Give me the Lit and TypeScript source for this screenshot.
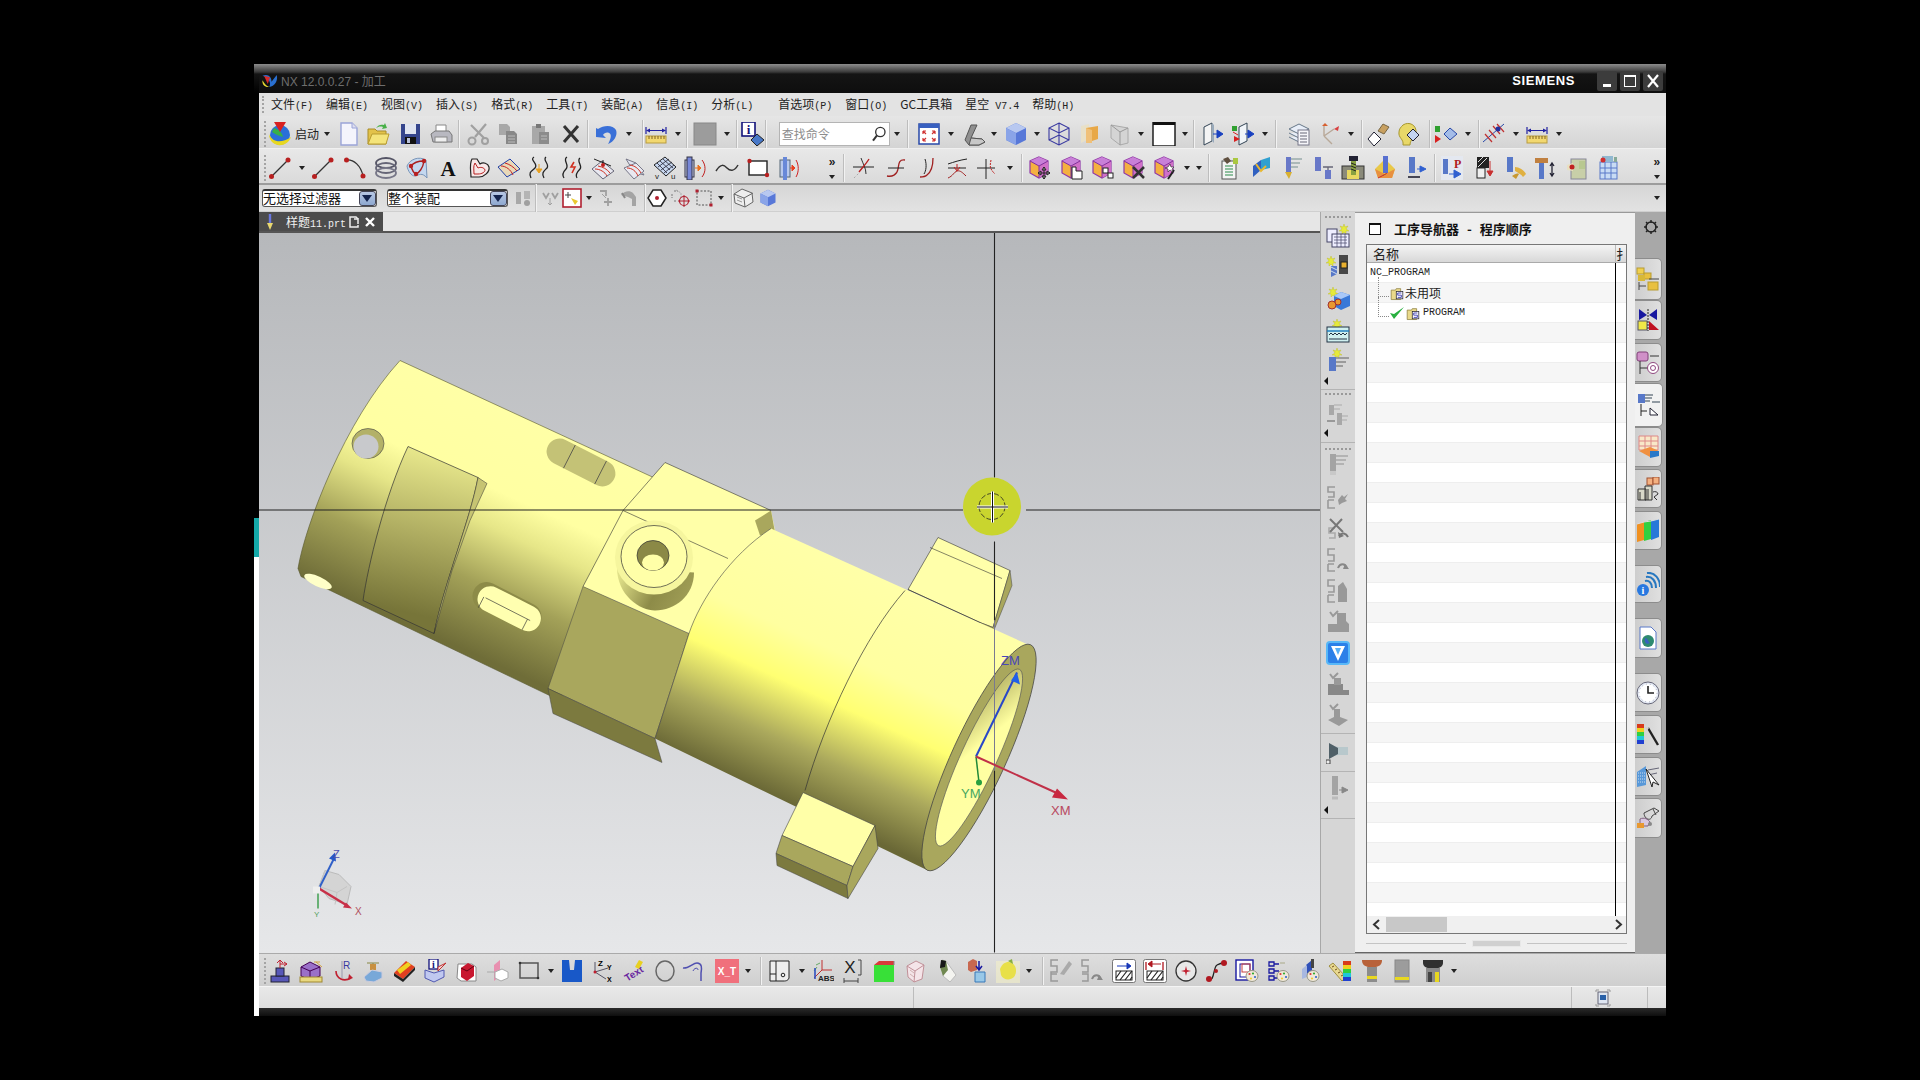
import { LitElement, html, css, svg } from "lit";
import { customElement } from "lit/decorators.js";

// reference was measured on the 1568px preview, specs below use those numbers
const K = 1920 / 1568;

const burst = (x: number, y: number) =>
  svg`<path transform="translate(${x} ${y})" d="M5 0l1 3 3-1-2 3 3 2-3 0 0 3-2-2-2 2 0-3-3 0 3-2-2-3 3 1z" fill="#e6ea3a" stroke="#b8b820" stroke-width=".4"/>`;
const rainbow = (x: number, y: number, w: number) => svg`
  <rect x=${x} y=${y} width=${w} height="4" fill="#d83a1a"/><rect x=${x} y=${y + 4} width=${w} height="4" fill="#f0d020"/>
  <rect x=${x} y=${y + 8} width=${w} height="4" fill="#30d040"/><rect x=${x} y=${y + 12} width=${w} height="4" fill="#20c8d8"/>
  <rect x=${x} y=${y + 16} width=${w} height="4" fill="#2040d0"/>`;
const palette = svg`<ellipse cx="17" cy="17" rx="6" ry="5.5" fill="#f0e8d8" stroke="#998"/><circle cx="14.500" cy="15" r="1.100" fill="#d33"/><circle cx="18" cy="14.500" r="1.100" fill="#3a3"/><circle cx="20" cy="18" r="1.100" fill="#36c"/><circle cx="16" cy="19.500" r="1.100" fill="#ec3"/>`;
const purple = (extra: unknown) => svg`
  <path d="M11 1l9 4v12l-9 5-9-5V5z" fill="#f4b040" stroke="#9038a8" stroke-width="1.200"/><path d="M11 1l9 4-9 5-9-5z" fill="#c880d8"/><path d="M11 10l9-5v12l-9 5z" fill="#d070c8"/><path d="M2 5l9 5 9-5M11 10v12" fill="none" stroke="#8030a0"/>${extra}`;
const folderS = svg`<path d="M3 7h6l1-2h6v15H3z" fill="#e9d98a" stroke="#8a7c3c"/><rect x="10" y="9" width="9" height="10" fill="#fff" stroke="#223"/><path d="M17 11h-5v3h5v3h-5" fill="none" stroke="#22a" stroke-width="1.100"/>`;
const hatchBox = (top: unknown) => svg`
  <rect x=".5" y=".5" width="23" height="23" rx="2" fill="#fff" stroke="#777"/>${top}
  <rect x="4" y="12" width="16" height="9" fill="#fff" stroke="#222"/>
  <path d="M4 19l5-7M8 21l7-9M13 21l7-9M18 21l2-3" stroke="#222" stroke-width="1.200"/>`;
const cubeShape = svg`<path d="M12 1l10 5v12l-10 5-10-5V6z" fill="#5878d8"/><path d="M12 1l10 5-10 5L2 6z" fill="#b8c8f0"/><path d="M2 6l10 5v12L2 18z" fill="#8aa4e8"/>`;

const I: Record<string, unknown> = {
  logo: svg`<circle cx="12" cy="13" r="10" fill="#2a6fd8"/><path d="M1 12c3 8 12 10 22 3-2 6-8 9-13 8C5 22 1 18 1 12z" fill="#e8d820"/><path d="M6 6c4 1 8 4 9 9-4-1-8-3-11-5z" fill="#38b048"/><path d="M6 0h12l-6 10z" fill="#d82020"/>`,
  new: svg`<path d="M4 1h11l5 5v17H4z" fill="#f4f4fc" stroke="#9aa4d8" stroke-width="1.400"/><path d="M15 1v5h5" fill="#dde" stroke="#9aa4d8"/>`,
  open: svg`<path d="M2 7h7l2 2h9v13H2z" fill="#e2c24a" stroke="#a88c28"/><path d="M2 22l4-10h17l-3 10z" fill="#f4e47a" stroke="#b89c30"/><path d="M10 6c2-3 5-4 8-3l1-2 2 5-5 1 1-2c-3-1-5 0-7 1z" fill="#48b048"/>`,
  save: svg`<rect x="3" y="2" width="19" height="20" fill="#34448c"/><rect x="7" y="2" width="11" height="10" fill="#dfe4f0"/><rect x="7" y="15" width="11" height="7" fill="#111"/><rect x="9" y="16" width="3" height="5" fill="#b8c0d8"/>`,
  print: svg`<path d="M7 3h10v8H7z" fill="#fff" stroke="#888"/><path d="M2 12l4-3h14l3 4v7H4z" fill="#b8b8c0" stroke="#777"/><rect x="6" y="15" width="12" height="5" fill="#eee" stroke="#888"/>`,
  cut: svg`<path d="M20 2L9 15M5 3l13 13" stroke="#a0a0a0" stroke-width="2.200"/><circle cx="6" cy="19" r="3.500" fill="none" stroke="#a0a0a0" stroke-width="2"/><circle cx="19" cy="19" r="3" fill="none" stroke="#a0a0a0" stroke-width="2"/>`,
  copy: svg`<path d="M3 2h8l3 3v8H3z" fill="#a8a8a8"/><path d="M10 9h8l3 3v10H10z" fill="#888"/><path d="M12 14h7M12 17h7M12 20h7" stroke="#bbb"/>`,
  paste: svg`<rect x="4" y="4" width="13" height="18" fill="#a8a8a8"/><rect x="8" y="2" width="5" height="4" fill="#777"/><rect x="11" y="10" width="10" height="12" fill="#8c8c8c"/><path d="M13 14h6M13 17h6" stroke="#bbb"/>`,
  del: svg`<path d="M5 4l14 16M19 4L5 20" stroke="#333" stroke-width="3"/>`,
  undo: svg`<path d="M3 7c6-4 15-4 18 1 2 5-2 12-8 14 3-5 4-10 1-11-2-1-5 0-6 2l3 3-10-1 0-9z" fill="#3a70d8"/>`,
  ruler: svg`<rect x="2" y="14" width="20" height="7" fill="#f2d870" stroke="#b89c40"/><path d="M5 14v3M8 14v3M11 14v3M14 14v3M17 14v3M20 14v3" stroke="#806020"/><path d="M2 5v7M22 5v7M3 8.500h18" stroke="#2020a0" stroke-width="1.200"/><path d="M2 8.500l4-2v4zM22 8.500l-4-2v4z" fill="#2020a0"/>`,
  gbox: svg`<rect x="1" y="1" width="22" height="22" fill="#9c9c9c" stroke="#888"/>`,
  info: svg`<rect x="1" y="0" width="13" height="14" fill="#fff" stroke="#12127a" stroke-width="1.600"/><text x="7.500" y="12" font-size="13" font-weight="700" text-anchor="middle" font-family="Liberation Serif" fill="#12127a">i</text><path d="M16 12l7 6-7 6-6-6z" fill="#4878c8" stroke="#222"/>`,
  fit: svg`<rect x="2" y="2" width="20" height="20" fill="#fff" stroke="#2848a8" stroke-width="1.500"/><rect x="2" y="2" width="20" height="4" fill="#3860c0"/><path d="M6 9l3 3M6 9v3M6 9h3M18 9l-3 3M18 9v3M18 9h-3M6 19l3-3M6 19v-3M6 19h3M18 19l-3-3M18 19v-3M18 19h-3" stroke="#d03030" stroke-width="1.200" fill="none"/>`,
  shade: svg`<path d="M4 18L10 3h6l-6 13 11 1 3 3-6 3H8z" fill="#909090" stroke="#555"/><path d="M10 16l11 1 3 3-6 3H8z" fill="#c8c8c8" stroke="#555"/>`,
  cube: cubeShape,
  wire: svg`<path d="M12 1l10 5v12l-10 5-10-5V6zM2 6l10 5 10-5M12 11v12M2 18l10-5 10 5M12 1v12" fill="none" stroke="#3838a0" stroke-width="1.100"/>`,
  fad1: svg`<path d="M4 4l8-2v15l-8 4z" fill="#e8e0c8"/><path d="M9 6l12-2v13l-12 4z" fill="#e8a848"/><path d="M9 6l6 2v13l-6 0z" fill="#f0c078"/>`,
  fad2: svg`<path d="M3 3l17 3v15l-8 2-9-7z" fill="#d4d4d4" stroke="#aaa"/><path d="M3 3l9 7 8-4M12 10v13" fill="none" stroke="#999"/>`,
  wbox: svg`<rect x="1" y="0" width="22" height="24" fill="#fff" stroke="#111" stroke-width="1.400"/><rect x="1" y="0" width="22" height="3" fill="#111"/>`,
  vcut1: svg`<path d="M3 5l8-4v18l-8 4z" fill="#f4f4f4" stroke="#345"/><path d="M11 1l2 2v18l-2-2z" fill="#9ab"/><path d="M12 12h7M16 8l6 4-6 4z" fill="#1840c0" stroke="#1840c0"/>`,
  vcut2: svg`<path d="M8 5l8-4v18l-8 4z" fill="#f0f4f8" stroke="#345"/><path d="M1 4h5v5H1z" fill="#30a030"/><path d="M3 14l6 3-6 3z" fill="#d82020"/><path d="M2 10l5 3" stroke="#d82020"/><path d="M14 12h5M17 8l6 4-6 4z" fill="#1840c0" stroke="#1840c0"/>`,
  layers: svg`<path d="M2 7l10-5 10 5-10 5zM2 11l10 5 10-5M2 15l10 5 10-5" fill="#e8eef8" stroke="#678"/><rect x="11" y="8" width="11" height="15" fill="#f6f6fa" stroke="#778"/><path d="M13 11h7M13 14h7M13 17h7M13 20h7" stroke="#667"/>`,
  csys: svg`<path d="M7 14V3M7 14l10-7M7 14l8 8" stroke="#b8a898" stroke-width="1.400"/><path d="M5 4l3-3 3 3z" fill="#d86030"/><path d="M17 7l5-3-1 5z" fill="#d84040"/>`,
  diam: svg`<path d="M8 10l7 7-7 7-6-7z" fill="#fff" stroke="#223"/><path d="M12 9l5-7 6 3-5 7z" fill="#c8a060" stroke="#764"/>`,
  head: svg`<path d="M6 3c6-4 14 0 13 8-1 5-6 6-6 12H6c1-6-5-7-4-13 0-3 2-5 4-7z" fill="#e8d868" stroke="#a89830"/><path d="M16 7l6 6-6 6-6-6z" fill="#c4d4f0" stroke="#223"/>`,
  rg: svg`<path d="M1 4h5v6H1z" fill="#30a030"/><path d="M1 13l6 4-6 4z" fill="#d82020"/><path d="M16 6l7 6-7 6-6-6z" fill="#a4bce8" stroke="#2848a8"/>`,
  hatchr: svg`<path d="M1 20L22 2" stroke="#2848a8"/><path d="M3 12l7 8M7 8l7 8M11 4l7 8M15 2l7 8" stroke="#c03030" stroke-width="1.200"/><circle cx="16" cy="7" r="2.500" fill="#2030a0"/>`,
  line: svg`<path d="M3 21L20 4" stroke="#333" stroke-width="1.300"/><circle cx="3.500" cy="20.500" r="2.500" fill="#b82020"/><circle cx="20" cy="4" r="2.500" fill="#b82020"/>`,
  arc: svg`<path d="M3 4c8-1 15 6 17 16" fill="none" stroke="#333" stroke-width="1.300"/><circle cx="3.500" cy="4" r="2.500" fill="#b82020"/><circle cx="20" cy="20" r="2.500" fill="#b82020"/>`,
  spiral: svg`<ellipse cx="12" cy="7" rx="10" ry="5" fill="none" stroke="#556" stroke-width="1.800"/><ellipse cx="12" cy="12" rx="10" ry="5" fill="none" stroke="#667" stroke-width="1.800"/><ellipse cx="12" cy="17" rx="10" ry="5" fill="none" stroke="#778" stroke-width="1.800"/>`,
  surf: svg`<path d="M2 10C5 3 14 0 21 4l1 18c-5-6-8-3-12-2C6 20 3 15 2 10z" fill="#c4d8f0" stroke="#7894b8"/><path d="M6 10c3-4 8-5 13-5M6 10c1 4 3 7 5 8M11 18c3-1 7-6 8-13" fill="none" stroke="#a82020" stroke-width="1.400"/><circle cx="6" cy="10" r="2.200" fill="#b82020"/><circle cx="11" cy="18" r="2.200" fill="#b82020"/><circle cx="19" cy="5" r="2.200" fill="#b82020"/>`,
  A: svg`<text x="12" y="20" font-size="21" font-weight="700" text-anchor="middle" font-family="Liberation Serif" fill="#111">A</text>`,
  heart: svg`<path d="M5 3h5l3 5c3-2 8-1 9 3 1 5-5 10-10 10H4C4 16 2 8 5 3z" fill="#f8e8e8" stroke="#222" stroke-width="1.200"/><path d="M8 7l3 5c2-1 6-1 7 2 0 2-3 4-7 4H7C7 14 6 10 8 7z" fill="none" stroke="#b82020"/>`,
  patch: svg`<path d="M1 11l12-8 10 10-13 8z" fill="#e8d8b8" stroke="#2040a8"/><path d="M4 10c5 0 10 4 12 9M8 7c4 1 9 4 12 8" stroke="#c82020" fill="none"/>`,
  crv1: svg`<path d="M6 1C1 4 11 8 7 12c-3 3-7 4-4 10M18 1c-4 3 4 7 1 11-3 3-6 5-3 10" fill="none" stroke="#222" stroke-width="1.300"/><path d="M11 8v8M8 13l3 4 3-4z" fill="#e8a020" stroke="#e8a020"/>`,
  crv2: svg`<path d="M7 1C2 4 10 9 6 13c-3 3-4 6-2 9M20 2c-4 3 3 8 0 11-3 3-5 6-3 9" fill="none" stroke="#222" stroke-width="1.300"/><path d="M14 6l-3 5h4l-3 6" fill="none" stroke="#d03020" stroke-width="1.600"/>`,
  pl1: svg`<path d="M1 13L11 5l12 10-11 8z" fill="#e8e8f0" stroke="#667"/><path d="M4 13c5 0 10 3 12 7M7 10c5 1 9 3 12 7" stroke="#d03020" fill="none"/><path d="M3 3l17 7M12 4v6" stroke="#222"/><circle cx="12" cy="9" r="2" fill="#c02020"/>`,
  pl2: svg`<path d="M4 3l10 4 8 12-10-3z" fill="#dfe4f0" stroke="#778"/><path d="M2 12l12-5 8 8-10 8z" fill="#e8e8f0" stroke="#778"/><path d="M5 12c5 0 9 3 11 8M8 9c5 1 8 3 11 8" stroke="#d03020" fill="none"/>`,
  grid: svg`<path d="M1 9L12 1l11 10-10 9z" fill="#c8d8f0" stroke="#222"/><path d="M4 7l10 10M7 5l10 9M10 3l10 9M5 11l11-8M8 14l11-8M11 17l10-8" stroke="#223" stroke-width=".8"/><text x="2" y="23" font-size="8" font-family="Liberation Sans" fill="#222">v</text><text x="18" y="23" font-size="8" font-family="Liberation Sans" fill="#222">u</text>`,
  cyl: svg`<rect x="2" y="4" width="9" height="17" fill="#c8d0f0" stroke="#334"/><rect x="4" y="1" width="5" height="23" fill="#7888d8" stroke="#334"/><path d="M12 12h3M15 9l3 3-3 3z" fill="#e87020" stroke="#e87020"/><path d="M19 4c4 5 4 12 0 17" fill="none" stroke="#c02020"/>`,
  tilde: svg`<path d="M1 15c5-8 8-6 11-3s7 4 11-3" fill="none" stroke="#333" stroke-width="1.500"/>`,
  rect: svg`<rect x="3" y="5" width="18" height="14" fill="#fff" stroke="#222" stroke-width="1.400"/><circle cx="3.500" cy="5" r="2.200" fill="#b82020"/><circle cx="21" cy="19" r="2.200" fill="#b82020"/>`,
  cylb: svg`<rect x="4" y="4" width="10" height="17" fill="#b8c8ec" stroke="#567"/><rect x="7" y="1" width="4" height="23" fill="#6888d8"/><path d="M14 12h3M16 9l3 3-3 3z" fill="#e84020" stroke="#e84020"/><path d="M20 4c3 5 3 12 0 17" fill="none" stroke="#d02020"/>`,
  tr1: svg`<path d="M1 11h21" stroke="#222"/><path d="M9 2c2 6 5 10 5 16" fill="none" stroke="#333"/><path d="M17 3C14 8 10 12 7 16" stroke="#b82020" fill="none" stroke-width="1.400"/><path d="M2 22l5-5" stroke="#aaa" stroke-dasharray="2 2"/>`,
  tr2: svg`<path d="M21 4C14 3 15 9 14 13 13 19 8 21 3 20" fill="none" stroke="#a02020" stroke-width="1.300"/><path d="M4 12h16" stroke="#222"/>`,
  tr3: svg`<path d="M19 2c0 8-2 14-6 17-2 2-5 2-7 2" fill="none" stroke="#a02020" stroke-width="1.300"/><path d="M11 3c2 6 1 12-1 15" stroke="#222" fill="none"/>`,
  tr4: svg`<path d="M3 8c6-2 12-4 19-5M3 12h18" stroke="#222" fill="none"/><path d="M3 22c5-2 6-6 9-7 3-1 6 2 9 5" stroke="#a02020" fill="none"/><path d="M12 8v6M9 11l3 4 3-4" stroke="#c02020" fill="none"/>`,
  tr5: svg`<path d="M1 12h18M10 3v20" stroke="#222"/><path d="M15 4c-1 6-2 8 4 14" stroke="#c02020" stroke-dasharray="2 1" fill="none"/>`,
  c1: purple(svg`<path d="M16 11v12M10 17h12M16 11l-2 3h4zM16 23l-2-3h4zM10 17l3-2v4zM22 17l-3-2v4z" fill="#fff" stroke="#222"/>`),
  c2: purple(svg`<path d="M12 11h4v4h6v8H12z" fill="#fff" stroke="#222"/>`),
  c3: purple(svg`<rect x="12" y="12" width="5" height="5" fill="#fff" stroke="#222"/><rect x="17" y="17" width="5" height="5" fill="#fff" stroke="#222"/>`),
  c4: purple(svg`<path d="M11 11l11 11M22 11L11 22" stroke="#333" stroke-width="2.500"/>`),
  c5: purple(svg`<path d="M15 23l6-9" stroke="#222" stroke-width="2"/><path d="M17 8l1 3 3 0-2 2 1 3-3-2-2 2 0-3-3-1 3-1z" fill="#fff" stroke="#222" stroke-width=".6"/>`),
  m1: svg`<rect x="4" y="5" width="14" height="18" fill="#f4f4f4" stroke="#555"/><path d="M7 10h8M7 13h8M7 16h8M7 19h8" stroke="#2a8a4a"/><path d="M5 3l5-2 3 4-4 3z" fill="#605040"/><rect x="15" y="2" width="5" height="6" fill="#aac840"/>`,
  m2: svg`<path d="M4 10l8-6v10l-8 7z" fill="#3060c0"/><path d="M12 4l9-3v11l-9 2z" fill="#30a0d0"/><path d="M7 8l5 7 5-5" fill="none" stroke="#e8b830" stroke-width="2"/>`,
  m3: svg`<rect x="6" y="1" width="5" height="15" fill="#6878c8"/><path d="M11 3h11M11 7h9M11 11h7" stroke="#9aa" stroke-width="1.500"/><path d="M5 16h7l-3 7z" fill="#d8b030"/>`,
  m4: svg`<rect x="4" y="1" width="6" height="14" fill="#6878c8"/><path d="M12 11h10M17 11v11" stroke="#667" stroke-width="1.300"/><rect x="14" y="14" width="6" height="9" fill="#6878c8"/>`,
  m5: svg`<rect x="1" y="10" width="22" height="13" fill="#8a8a7a" stroke="#333"/><rect x="6" y="14" width="12" height="9" fill="#e8d860"/><rect x="8" y="0" width="9" height="5" fill="#223"/><path d="M10 5h5v14h-5z" fill="#88a040"/><path d="M10 7l5 2M10 10l5 2M10 13l5 2" stroke="#222"/>`,
  m6: svg`<path d="M12 3l10 10-3 9H5l-3-9z" fill="#e8c848"/><path d="M2 13l10 5 10-5-3 9H5z" fill="#e89040"/><rect x="10" y="0" width="5" height="17" fill="#5870d0"/><path d="M5 22c4-2 8-4 9-5" stroke="#d03030"/>`,
  m7: svg`<rect x="4" y="1" width="6" height="16" fill="#5878c8"/><path d="M3 21h12" stroke="#223" stroke-width="1.600"/><path d="M12 13h6M15 10l6 3-6 3z" fill="#3060d0" stroke="#3060d0"/>`,
  m8: svg`<rect x="1" y="0" width="22" height="24" fill="#e4e8f0"/><rect x="3" y="3" width="5" height="15" fill="#5878c8"/><text x="14" y="12" font-size="12" font-weight="700" font-family="Liberation Serif" fill="#b02020">P</text><path d="M9 18h7M14 14l7 4-7 4z" fill="#3060d0" stroke="#3060d0"/>`,
  m9: svg`<rect x="4" y="1" width="12" height="11" fill="#222"/><path d="M5 11l9-9M5 6l5-5" stroke="#ddd"/><rect x="4" y="12" width="8" height="10" fill="#f0f0f0" stroke="#222"/><path d="M17 5v14M14 15l3 5 3-5z" fill="#c83030" stroke="#c83030"/>`,
  m10: svg`<rect x="3" y="1" width="6" height="15" fill="#5878c8"/><path d="M11 11c4 0 9 3 11 7l-3 3c-2-3-5-4-8-6z" fill="#e0b040"/><path d="M8 20c3-2 5-3 7-2l-3 5z" fill="#c89830"/>`,
  m11: svg`<rect x="2" y="2" width="13" height="5" fill="#c08040"/><rect x="6" y="7" width="5" height="16" fill="#5878c8"/><path d="M19 8v11M17 10l2-3 2 3M17 17l2 3 2-3" fill="none" stroke="#223" stroke-width="1.300"/>`,
  m12: svg`<rect x="6" y="3" width="15" height="20" fill="#c8cfa8" stroke="#889"/><rect x="14" y="5" width="6" height="8" fill="#b8c890"/><path d="M2 9l6-2v8l-6-1z" fill="#e8e0c0"/><circle cx="7" cy="11" r="2.500" fill="#c02020"/>`,
  m13: svg`<rect x="4" y="6" width="17" height="17" fill="#c8dcf4" stroke="#5878c8"/><path d="M9 6v17M15 6v17M4 12h17M4 17h17" stroke="#5878c8"/><rect x="6" y="0" width="11" height="6" fill="#90b8d0"/><circle cx="7" cy="4" r="2.500" fill="#d03030"/><rect x="18" y="1" width="3" height="5" fill="#8a9"/>`,
  gvt: svg`<rect x="3" y="2" width="5" height="10" fill="#a8a8a8"/><rect x="11" y="10" width="5" height="12" fill="#a8a8a8"/><path d="M1 18h8" stroke="#999" stroke-width="2"/><path d="M8 2h8M8 6h6M16 13h6M16 17h5" stroke="#aaa"/>`,
  gpair: svg`<rect x="5" y="6" width="5" height="12" fill="#a8a8a8"/><rect x="13" y="5" width="6" height="8" fill="#b4b4b4"/><circle cx="16" cy="17" r="3" fill="#a0a0a0"/>`,
  gsm1: svg`<path d="M4 7l3 5 3-5M13 7l3 5 3-5" fill="none" stroke="#a0a0a0" stroke-width="1.800"/><path d="M11 12v7M9 17l2 2 2-2" stroke="#a0a0a0" fill="none"/>`,
  rbox: svg`<rect x="3" y="3" width="18" height="18" fill="#fff" stroke="#b02030" stroke-width="1.600"/><path d="M8 6v6M5 9h6" stroke="#444"/><path d="M11 12l7 3-3 4z" fill="#e8c830"/>`,
  gplus: svg`<path d="M6 5h6v5M14 12v8M10 16h8" fill="none" stroke="#a0a0a0" stroke-width="1.800"/><path d="M8 8l4 4" stroke="#a0a0a0"/>`,
  ghook: svg`<path d="M4 9c3-4 9-5 12-2l3 4v9h-4v-7l-4-2z" fill="#a4a4a4"/><path d="M5 7l3 5" stroke="#888" stroke-width="2"/>`,
  hexc: svg`<path d="M8 4h8l5 8-5 8H8l-5-8z" fill="#fff" stroke="#222" stroke-width="1.500"/><circle cx="12" cy="12" r="2" fill="#b02030"/>`,
  gtar: svg`<path d="M5 5h4M3 8v4M5 15h2" stroke="#999" stroke-width="1.500" stroke-dasharray="2 1"/><path d="M7 4l5 3v5" fill="none" stroke="#aaa" stroke-dasharray="2 1"/><circle cx="15" cy="15" r="4.500" fill="none" stroke="#b02030" stroke-width="1.200"/><path d="M9 15h12M15 9v12" stroke="#b02030"/>`,
  dash: svg`<rect x="5" y="5" width="14" height="14" fill="none" stroke="#555" stroke-dasharray="2 1.500"/><rect x="3.500" y="3.500" width="3" height="3" fill="#b02030"/><rect x="17.500" y="17.500" width="3" height="3" fill="#b02030"/>`,
  wcube: svg`<path d="M10 3l10 4 1 9-8 5-10-4-1-9z" fill="#eee" stroke="#666"/><path d="M2 8l10 4 9-5M12 12l1 9" fill="none" stroke="#666"/><path d="M5 11l5 2M5 14l5 2" stroke="#999"/>`,
  scube: svg`<g transform="translate(3 3) scale(.75)">${cubeShape}</g>`,
  g3: svg`<rect x="4" y="1" width="6" height="17" fill="#a4a4a4"/><path d="M10 3h12M10 7h10M10 11h8" stroke="#a8a8a8" stroke-width="1.300"/><rect x="4" y="18" width="6" height="4" fill="#c8c8c8"/>`,
  g5w: svg`<path d="M9 1H2v5h6v5H2M2 14h6M2 14v8h7" fill="none" stroke="#9a9a9a" stroke-width="1.600"/><path d="M12 14l4-5 2 2 4-3-3 5 2 2-5 2-3 2z" fill="#999"/>`,
  g5x: svg`<path d="M9 11H3v5h6v5H3" fill="none" stroke="#aaa" stroke-width="1.600"/><path d="M4 2l13 13M16 2L4 15" stroke="#777" stroke-width="2"/><path d="M13 19c3-4 7-3 9 1" fill="none" stroke="#777" stroke-width="2"/><path d="M12 15l1 6 5-2z" fill="#777"/>`,
  g5c: svg`<path d="M9 1H2v6h6v6H2M2 16h6M2 16v7h7" fill="none" stroke="#9a9a9a" stroke-width="1.600"/><path d="M12 20c2-5 7-5 9 0" fill="none" stroke="#888" stroke-width="2"/><path d="M19 16l4 5h-6z" fill="#888"/>`,
  g5d: svg`<path d="M9 1H2v6h6v6H2M2 16h6M2 16v7h7" fill="none" stroke="#9a9a9a" stroke-width="1.600"/><path d="M12 23V7l5-4 4 7v13z" fill="#999"/>`,
  gchk: svg`<path d="M4 2l3 4 5-5" fill="none" stroke="#999" stroke-width="2"/><path d="M11 3h9v8l3 3v8H2v-8h9z" fill="#999"/>`,
  V: svg`<rect x="0" y="0" width="24" height="24" rx="4" fill="#58b8f8"/><rect x="2" y="2" width="20" height="20" rx="2" fill="#2c80e8"/><path d="M5 5h14l-7 15z" fill="#fff"/><path d="M9 7h6l-3 7z" fill="#58b0f8"/>`,
  gst: svg`<path d="M4 2l3 4 5-5" fill="none" stroke="#999" stroke-width="2"/><rect x="2" y="12" width="15" height="6" fill="#888"/><rect x="2" y="18" width="21" height="5" fill="#888"/><rect x="8" y="6" width="7" height="7" fill="#999"/>`,
  gbs: svg`<path d="M4 2l3 4 5-5" fill="none" stroke="#999" stroke-width="2"/><path d="M8 6h6v8l8 3-9 6-11-6 6-3z" fill="#999"/>`,
  lath: svg`<path d="M3 3c2 3 6 3 9 4h10v8H12c-3 1-7 1-9 4z" fill="#b8c8cc"/><path d="M3 3l9 5v6l-9 5z" fill="#506068"/><rect x="0" y="20" width="4" height="4" fill="#eee" stroke="#444"/>`,
  glow: svg`<rect x="6" y="0" width="6" height="19" fill="#a4a4a4"/><path d="M6 22h6" stroke="#bbb" stroke-width="3"/><path d="M13 14h6M16 11l6 3-6 3z" fill="#888" stroke="#888"/>`,
  vlist: svg`${burst(13, 0)}<rect x="1" y="5" width="10" height="13" fill="#eef" stroke="#446"/><rect x="6" y="10" width="17" height="13" fill="#eef" stroke="#446"/><path d="M8 13h13M8 16h13M8 19h13M11 10v13M15 10v13M19 10v13" stroke="#446" stroke-width=".7"/>`,
  vtool: svg`${burst(0, 2)}<path d="M5 12h6v8l-6 3z" fill="#5878c8"/><path d="M5 13l6 3M5 17l6 3" stroke="#cde"/><rect x="13" y="1" width="9" height="19" fill="#484848"/><rect x="15" y="8" width="6" height="6" fill="#e8b030" stroke="#222"/>`,
  vgeo: svg`${burst(2, 0)}<path d="M15 5l9 3v11l-9 4-7-4V9z" fill="#3878d8"/><path d="M15 5l9 3-9 4-7-3z" fill="#a8c8f8"/><circle cx="6" cy="18" r="4" fill="#e89830" stroke="#a03030"/><circle cx="12" cy="15" r="3" fill="#e89830" stroke="#a03030"/>`,
  vwater: svg`${burst(6, 0)}<rect x="1" y="8" width="22" height="15" fill="#d0f0f0" stroke="#234"/><path d="M1 12h22" stroke="#2080c0" stroke-width="1.500"/><path d="M3 16l2-2 2 2 2-2 2 2 2-2 2 2 2-2 2 2 2-2M3 20h18" stroke="#234" fill="none"/>`,
  vmeth: svg`${burst(6, 0)}<rect x="3" y="9" width="7" height="14" fill="#5878c8"/><path d="M10 10h13M10 14h10M10 18h7" stroke="#888" stroke-width="1.500"/>`,
  t1: svg`<rect x="1" y="1" width="7" height="6" fill="#f0d050" stroke="#b89c30"/><rect x="8" y="6" width="7" height="6" fill="#e8c040" stroke="#b89c30"/><rect x="2" y="8" width="7" height="6" fill="#d8b838"/><path d="M3 15v8M3 19h7M13 12h10" stroke="#444"/><rect x="12" y="15" width="10" height="8" fill="#e8c040" stroke="#b89c30"/>`,
  t2: svg`<path d="M3 1v11l8-5zM21 1v11l-8-5z" fill="#1818a0"/><rect x="2" y="13" width="9" height="9" fill="#f0e848" stroke="#556"/><path d="M13 22V13l10 9z" fill="#c01020"/><path d="M12 1v22" stroke="#222" stroke-dasharray="2 1"/>`,
  t3: svg`<rect x="1" y="1" width="11" height="9" rx="2" fill="#d090c8" stroke="#804078"/><path d="M4 10v13M4 17h9M14 5h9" stroke="#333"/><circle cx="17" cy="17" r="5.500" fill="#fff" stroke="#904880"/><circle cx="17" cy="17" r="2.500" fill="none" stroke="#904880"/>`,
  t4: svg`<rect x="1" y="1" width="7" height="9" fill="#5878c8"/><path d="M8 2h8M8 5h7M8 8h5M15 9h8" stroke="#345"/><path d="M4 11v12M4 18h6" stroke="#222"/><path d="M13 22v-7l8 7z" fill="#fff" stroke="#223"/>`,
  t5: svg`<path d="M3 1h19v14H3z" fill="#f8e8c8" stroke="#d88"/><path d="M9 1v14M15 1v14M3 6h19M3 11h19" stroke="#d88"/><path d="M3 16l11-4 9 4-9 6z" fill="#f09040"/><path d="M14 16l9 0v5l-9 2z" fill="#2878c8"/>`,
  t6: svg`<rect x="11" y="1" width="6" height="7" fill="#f4b080" stroke="#a05030"/><rect x="17" y="0" width="6" height="7" fill="#f4b080" stroke="#a05030"/><path d="M2 12h8v11H2zM9 9h7v14H9z" fill="#d8d8c8" stroke="#333"/><path d="M4 15v8M12 12v11M17 15c2-1 5 0 5 2l-4 3 3 3" stroke="#333" fill="none"/>`,
  t7: svg`<path d="M1 5l7-2v18l-7 2z" fill="#f09020"/><path d="M8 3l7-2v19l-7 2z" fill="#30d040"/><path d="M15 2l8-2v18l-8 3z" fill="#2878d8"/><path d="M1 5l7-2 7-1 8-2" stroke="#ddd" fill="none"/>`,
  t8: svg`<circle cx="7" cy="18" r="6" fill="#2878e0"/><text x="7" y="22" font-size="10" font-weight="700" text-anchor="middle" font-family="Liberation Serif" fill="#fff">i</text><path d="M9 9c4-1 7 2 7 7M10 5c6-1 10 4 10 11M11 1c8-1 13 6 13 14" fill="none" stroke="#2878c0" stroke-width="2"/>`,
  t9: svg`<path d="M4 1h11l5 5v17H4z" fill="#fff" stroke="#5878c8"/><circle cx="12" cy="15" r="6" fill="#2e8a70"/><path d="M9 12c3 0 3 4 5 5-3 2-6 0-5-5z" fill="#3860c0"/>`,
  t10: svg`<circle cx="12" cy="12" r="11" fill="#e8eef8" stroke="#667"/><circle cx="12" cy="12" r="9" fill="#fff" stroke="#aab" stroke-dasharray="1 3"/><path d="M12 5v7h6" fill="none" stroke="#222" stroke-width="1.600"/>`,
  t11: svg`${rainbow(1, 1, 7)}<path d="M12 5l10 17" stroke="#222" stroke-width="2.400"/><path d="M9 4l4 1-2 3z" fill="#ccc"/>`,
  t12: svg`<path d="M1 7l9-6v19l-9 2z" fill="#5898d8"/><path d="M2 8h7M2 11h7M2 14h7M2 17h7" stroke="#cde" stroke-dasharray="1 1"/><path d="M12 5l11-2M12 10l9-2" stroke="#667"/><path d="M10 4l13 16-6-3-1 5z" fill="#fff" stroke="#222"/>`,
  t13: svg`<path d="M8 7l10-5 5 3-7 5c-1 6-8 3-8-3zM17 3l3 6" fill="none" stroke="#444"/><path d="M4 13c4-2 8 0 10 3l-2 4H4z" fill="#d8c8e0" stroke="#806080"/><rect x="1" y="17" width="7" height="5" fill="#e89830"/><circle cx="14" cy="18" r="2" fill="#888"/>`,
  stand: svg`<rect x="3" y="17" width="18" height="6" fill="#5858b8" stroke="#223"/><rect x="8" y="9" width="8" height="8" fill="#5858b8" stroke="#223"/><path d="M12 9V1M9 4l3-3 3 3M12 5h7M16 3l3 2-3 2" stroke="#c02030" fill="none"/>`,
  boxy: svg`<path d="M2 8l9-5 10 5v9l-10 4-9-4z" fill="#9a70c8" stroke="#405"/><path d="M2 8l9 4 10-4M11 12v9" fill="none" stroke="#405"/><rect x="1" y="18" width="22" height="5" fill="#e8d880" stroke="#a08830"/><path d="M17 3l6 5M15 3h6" stroke="#d0a040"/>`,
  rarc: svg`<text x="12" y="10" font-size="10" font-family="Liberation Sans" fill="#3838a0">R</text><path d="M5 12c0 8 8 11 15 7" fill="none" stroke="#c02030" stroke-width="1.600"/><path d="M11 2v17" stroke="#99a"/><path d="M18 15l4 4-5 2z" fill="#c02030"/>`,
  tooll: svg`<path d="M6 4h12M12 4v7" stroke="#884"/><rect x="9" y="5" width="6" height="6" fill="#c89040"/><path d="M3 18l8-7 10 2v6l-8 4-8-1z" fill="#78a8d8" stroke="#ccd"/>`,
  strip: svg`<path d="M2 14L14 2l9 6-12 12z" fill="#e04020"/><path d="M5 11L16 3l3 3-11 9z" fill="#f0d020"/><path d="M2 14l9 6 12-12v3L11 23 2 17z" fill="#222"/>`,
  icube: svg`<rect x="6" y="0" width="9" height="10" fill="#fff" stroke="#12127a" stroke-width="1.300"/><text x="10.500" y="9" font-size="10" font-weight="700" text-anchor="middle" font-family="Liberation Serif" fill="#12127a">i</text><path d="M2 11l9 3 10-3v7l-10 5-9-4z" fill="#c0c8f0" stroke="#5058b0"/><path d="M15 8l8-4-8 8z" fill="#f0d8d8" stroke="#c03030"/>`,
  rcube: svg`<path d="M4 5h14l4 3v14H7l-4-3z" fill="#fff" stroke="#888"/><path d="M7 9l7-5 6 3v10l-7 5-6-4z" fill="#c81830"/><path d="M7 9l6 3 7-5" fill="none" stroke="#601"/>`,
  pplane: svg`<path d="M9 6l6-5v16l-6 5z" fill="#e890b0"/><path d="M10 13l7-3 6 3v6l-7 3-6-3z" fill="#fff" stroke="#aaa"/><path d="M2 13h8" stroke="#aaa"/>`,
  thin: svg`<rect x="3" y="4" width="18" height="15" fill="none" stroke="#555" stroke-width="1.500"/><circle cx="3" cy="4" r="1.300" fill="#333"/><circle cx="21" cy="19" r="1.300" fill="#333"/>`,
  U: svg`<path d="M2 1h7l1 10h4l1-10h7v22H2z" fill="#1858c8"/>`,
  xyz: svg`<path d="M5 3v10l13-4M5 13l11 7" stroke="#556" fill="none"/><circle cx="5" cy="13" r="1.500" fill="#c02030"/><text x="8" y="7" font-size="8" font-weight="700" font-family="Liberation Sans">Z</text><text x="17" y="11" font-size="7" font-weight="700" font-family="Liberation Sans">Y</text><text x="17" y="23" font-size="7" font-weight="700" font-family="Liberation Sans">X</text>`,
  Text: svg`<text x="12" y="18" font-size="10" font-weight="700" text-anchor="middle" font-family="Liberation Sans" fill="#6a28a0" transform="rotate(-32 12 15)">Text</text><path d="M13 8l4-7 4 2-4 7z" fill="#e8d020"/>`,
  ring: svg`<ellipse cx="12" cy="12" rx="9" ry="10" fill="none" stroke="#666" stroke-width="1.500"/>`,
  hook: svg`<path d="M1 9c5 1 10-5 14-5 5 0 5 5 4 10v8" fill="none" stroke="#5050b0" stroke-width="1.500"/><path d="M11 12c1-3 5-4 5-1" fill="none" stroke="#5050b0"/>`,
  xt: svg`<rect x="0" y="0" width="24" height="24" fill="#f0707c"/><text x="12" y="16" font-size="10" font-weight="700" text-anchor="middle" font-family="Liberation Sans" fill="#fff">X_T</text>`,
  sheet: svg`<path d="M2 2h19v17c-1 3-4 3-5 3H2z" fill="#eee" stroke="#222"/><path d="M8 2v20M2 15h6" stroke="#222"/><circle cx="15" cy="16" r="1.800" fill="none" stroke="#222"/>`,
  abs: svg`<path d="M12 1v10M12 11h10M12 11l-8 8" stroke="#c03030" fill="none"/><path d="M6 6l4-2M4 12l3-4" stroke="#6a6"/><path d="M5 9v11" stroke="#3050c0" stroke-width="1.600"/><text x="8" y="22" font-size="8" font-weight="700" font-family="Liberation Sans" fill="#222">ABS</text>`,
  xdim: svg`<text x="9" y="14" font-size="17" text-anchor="middle" font-family="Liberation Sans" fill="#222">X</text><path d="M17 1h3v15h-3M3 22h14M3 19v5M17 19v5" fill="none" stroke="#444"/>`,
  gbx: svg`<rect x="2" y="6" width="20" height="17" fill="#38e038"/><path d="M2 6l5-4h15v4z" fill="#d83a3a"/><path d="M22 2v4" stroke="#888"/>`,
  pinkc: svg`<path d="M4 7l9-5 8 4-2 14-8 3-6-5z" fill="#f4e4e8" stroke="#c09098"/><path d="M4 7l8 5 9-6M12 12l-1 11" fill="none" stroke="#c09098"/><path d="M7 15l4 3M7 11l4 3" stroke="#d0b0b0"/>`,
  cone: svg`<path d="M8 1l4 1 10 14-6 7-7-6z" fill="#f4f4f0" stroke="#bbb"/><path d="M8 1l4 1 2 9-5 6-3-9z" fill="#708850"/><path d="M7 1l5 1-1 6-5 1z" fill="#181818"/>`,
  drop: svg`<path d="M2 3l5-3 4 2v9l-6 2-3-2z" fill="#c86850"/><path d="M13 2v8M10 7l3 4 3-4" stroke="#1818a0" fill="none" stroke-width="1.500"/><path d="M9 13h10v10H9z" fill="#98c8e8" stroke="#3878b8"/>`,
  lemon: svg`<rect x="0" y="2" width="24" height="22" fill="#f4f0c8" opacity=".6"/><path d="M4 10c3-7 8-8 12-6 5 3 5 10 2 14-4 4-11 3-13-2z" fill="#e8e048"/><path d="M12 2l4-2 1 5z" fill="#88b040"/>`,
  g5t: svg`<path d="M9 1H2v6h6v6H2v2h6M2 15v7h7" fill="none" stroke="#999" stroke-width="1.500"/><path d="M11 15L20 2l3 3-8 11z" fill="#aaa"/>`,
  g5s: svg`<path d="M9 1H2v6h6v6H2" fill="none" stroke="#999" stroke-width="1.500"/><path d="M2 15h6v7H2" fill="none" stroke="#999" stroke-width="1.500"/><path d="M12 20c2-5 7-5 9 0" fill="none" stroke="#888" stroke-width="2"/><path d="M19 16l4 5h-6z" fill="#888"/>`,
  hb1: hatchBox(svg`<path d="M5 7h13M15 4l4 3-4 3z" fill="#1838b8" stroke="#1838b8"/>`),
  hb2: hatchBox(svg`<path d="M7 5h11M9 2L5 5l4 3z" fill="#b01820" stroke="#b01820"/><path d="M3 3v8M20 3v8" stroke="#b01820" stroke-width="1.300"/>`),
  dot: svg`<circle cx="12" cy="12" r="10" fill="#e8e8e8" stroke="#333" stroke-width="1.300"/><path d="M12 7l1 4 4 1-4 1-1 4-1-4-4-1 4-1z" fill="#c02030"/>`,
  scurve: svg`<path d="M3 21c7 2 5-13 9-15 3-2 6-2 8-2" fill="none" stroke="#222" stroke-width="1.300"/><circle cx="4" cy="20" r="3" fill="#b01820"/><circle cx="19" cy="4" r="3" fill="#b01820"/><circle cx="11" cy="12" r="2" fill="#b01820"/>`,
  rpal: svg`<rect x="1" y="1" width="17" height="20" fill="#fff" stroke="#1818a0" stroke-width="1.400"/><rect x="5" y="5" width="10" height="13" fill="none" stroke="#1818a0"/><rect x="7" y="5" width="8" height="8" fill="none" stroke="#c84040"/>${palette}`,
  tpal: svg`<path d="M3 3h5v4H3zM3 10h5v4H3zM3 17h5v4H3zM8 5h5M8 12h5M8 19h5" fill="none" stroke="#1818a0" stroke-width="1.300"/><path d="M14 4h5" stroke="#aa8"/>${palette}`,
  mpal: svg`<path d="M10 6l6-5v12l-6 3z" fill="#3050b8"/><path d="M6 10l5-4v12l-5 2z" fill="#a8b8e0"/><rect x="15" y="0" width="3" height="9" fill="#444"/>${palette}`,
  rruler: svg`<path d="M1 7l4-3 13 14-4 4z" fill="#e8d890" stroke="#a09040"/><path d="M4 8l2-1M7 11l2-1M10 14l2-1M13 17l2-1" stroke="#705020"/>${rainbow(15, 2, 8)}`,
  tool1: svg`<path d="M2 1h20c0 4-2 6-6 7H8C4 7 2 5 2 1z" fill="#b8623a"/><rect x="7" y="8" width="10" height="15" fill="#8c8c8c"/><rect x="7" y="17" width="10" height="3" fill="#e8d820"/>`,
  tool2: svg`<rect x="5" y="1" width="14" height="22" fill="#9c9c9c" stroke="#888"/><rect x="5" y="18" width="14" height="3" fill="#e8d820"/>`,
  tool3: svg`<path d="M2 1h20v3c0 3-3 5-6 5H8C5 9 2 7 2 4z" fill="#303030"/><rect x="5" y="9" width="14" height="14" fill="#8a8a8a"/><rect x="7" y="13" width="4" height="10" fill="#444"/><rect x="14" y="13" width="4" height="10" fill="#e8d820"/>`,
};

function icon(name: string) {
  return html`<svg class="ic" viewBox="0 0 24 24">${I[name]}</svg>`;
}

type Spec = string;
const WIDTH: Record<string, number> = { v: 8, "|": 2, grip: 3, start: 27, search: 111, combo1: 115, combo2: 121, more: 8 };
const ORIGIN = 259;

// "center:name" tokens -> flow cells whose margins are worked out from the centres
function cells(spec: Spec) {
  let cursor = ORIGIN;
  return spec.trim().split(/\s+/).map((tok) => {
    const [c, name] = tok.split(":");
    const w = WIDTH[name] ?? 24;
    const m = parseFloat(c) * K - w / 2 - cursor;
    cursor += m + w;
    return { name, m, w };
  });
}

function cellBody(name: string) {
  switch (name) {
    case "v": return html`<i class="arrow"></i>`;
    case "|": return html`<i class="sep"></i>`;
    case "grip": return html`<i class="grip"></i>`;
    case "more": return html`<span class="more">»<i class="arrow"></i></span>`;
    case "start": return html`<span class="start">启动</span>`;
    case "search":
      return html`<span class="search"><span class="hint">查找命令</span>
        <svg class="ic sm" viewBox="0 0 24 24"><circle cx="14" cy="9" r="7" fill="#fff" stroke="#333" stroke-width="2"/><path d="M9 14l-6 8" stroke="#333" stroke-width="3"/></svg></span>`;
    case "combo1": return html`<span class="combo">无选择过滤器<b class="drop"></b></span>`;
    case "combo2": return html`<span class="combo">整个装配<b class="drop"></b></span>`;
    default: return icon(name);
  }
}

function hbar(spec: Spec) {
  return cells(spec).map(
    (c) => html`<span class="cell" style="margin-left:${c.m.toFixed(1)}px;width:${c.w}px">${cellBody(c.name)}</span>`
  );
}

const ROW1 = `217:grip 229:logo 252:start 267:v 285:new 309:open 335:save 360:print 375:| 390:cut 415:copy 441:paste 466:del 480:| 496:undo 514:v 525:| 536:ruler 554:v 561:| 576:gbox 594:v 602:| 615:info 626:| 681.5:search 733:v 742:| 759:fit 777:v 795:shade 812:v 830:cube 847:v 865:wire 890:fad1 915:fad2 932:v 951:wbox 968:v 975:| 991:vcut1 1015:vcut2 1033:v 1042:| 1061:layers 1086:csys 1104:v 1113:| 1126:diam 1151:head 1168:| 1181:rg 1199:v 1208:| 1221:hatchr 1239:v 1256:ruler 1274:v`;
const ROW2 = `217:grip 229:line 247:v 264:line 290:arc 315:spiral 341:surf 366:A 391:heart 416:patch 441:crv1 467:crv2 493:pl1 518:pl2 543:grid 568:cyl 594:tilde 619:rect 644:cylb 680:more 690:| 706:tr1 732:tr2 757:tr3 782:tr4 807:tr5 825:v 835:| 850:c1 876:c2 901:c3 927:c4 952:c5 970:v 980:v 988:| 1005:m1 1031:m2 1056:m3 1081:m4 1106:m5 1132:m6 1158:m7 1173:| 1187:m8 1214:m9 1239:m10 1263:m11 1289:m12 1314:m13 1354:more`;
const ROW3 = `261:combo1 365.5:combo2 427:gpair 438:| 450:gsm1 467:rbox 481:v 495:gplus 514:ghook 527:| 537:hexc 556:gtar 575:dash 589:v 598:| 608:wcube 627:scube 1353:v`;
const ROW4 = `217:grip 229:stand 254:boxy 280:rarc 305:tooll 330:strip 355:icube 381:rcube 406:pplane 432:thin 450:v 467:U 492:xyz 518:Text 543:ring 567:hook 594:xt 611:v 622:| 637:sheet 655:v 672:abs 697:xdim 722:gbx 748:pinkc 773:cone 799:drop 824:lemon 841:v 852:| 867:g5t 892:g5s 918:hb1 944:hb2 969:dot 994:scurve 1019:rpal 1044:tpal 1069:mpal 1095:rruler 1121:tool1 1146:tool2 1171:tool3 1188:v`;

// vertical strip: [y centre in full px, name]
const VBAR: [number, string][] = [
  [217, "hg"], [236, "vlist"], [266, "vtool"], [299, "vgeo"], [331, "vwater"], [360, "vmeth"], [381, "lv"], [389, "hr"],
  [394, "hg"], [415, "gvt"], [433, "lv"], [442, "hr"],
  [449, "hg"], [465, "g3"], [498, "g5w"], [529, "g5x"], [560, "g5c"], [591, "g5d"], [622, "gchk"], [653, "V"], [684, "gst"], [715, "gbs"], [733, "hr"],
  [752, "lath"], [771, "hr"], [788, "glow"], [810, "lv"], [818, "hr"],
];
const VH: Record<string, number> = { hg: 2, lv: 8, hr: 1 };

// right side tabs: [top, bottom, icon]
const TABS: [number, number, string][] = [
  [258, 300, "t1"], [300, 340, "t2"], [343, 382, "t3"], [383, 427, "t4"], [427, 467, "t5"], [469, 508, "t6"], [511, 550, "t7"],
  [565, 603, "t8"], [618, 658, "t9"], [673, 712, "t10"], [715, 754, "t11"], [757, 796, "t12"], [798, 838, "t13"],
];

const MENU = [
  ["文件", "(F)"], ["编辑", "(E)"], ["视图", "(V)"], ["插入", "(S)"], ["格式", "(R)"], ["工具", "(T)"], ["装配", "(A)"], ["信息", "(I)"], ["分析", "(L)"],
  ["首选项", "(P)"], ["窗口", "(O)"], ["GC工具箱", ""], ["星空", " V7.4"], ["帮助", "(H)"],
];

@customElement("app-root")
export class AppRoot extends LitElement {
  static styles = css`
    :host {
      display: block;
      width: 1920px;
      height: 1080px;
      background: #000;
      overflow: hidden;
      font-family: "Noto Sans CJK SC", "Liberation Sans", sans-serif;
      font-size: 12px;
      color: #222;
    }
    .window {
      display: flex;
      width: 1412px;
      height: 952px;
      margin: 64px 0 0 254px;
    }
    .edge {
      width: 5px;
      display: flex;
      flex-direction: column;
      flex: none;
    }
    .edge .dark { height: 454px; background: linear-gradient(#8c8c8c 0, #3a3a3a 8px, #141414 10px, #000 29px); }
    .edge .teal { height: 39px; background: #14a8a8; }
    .edge .white { flex: 1; background: #fff; }
    .main {
      flex: 1;
      min-width: 0;
      display: flex;
      flex-direction: column;
    }
    .title {
      height: 29px;
      flex: none;
      background: linear-gradient(#8c8c8c 0, #3a3a3a 8px, #141414 10px, #0e0e0e);
      display: flex;
      align-items: center;
      padding-top: 4px;
      box-sizing: border-box;
      color: #6e6e6e;
      font-size: 12px;
    }
    .title .logo { width: 18px; height: 16px; margin: 0 2px 0 2px; }
    .title .name { flex: 1; font-family: "Liberation Sans", "Noto Sans CJK SC", sans-serif; }
    .siemens {
      color: #fff;
      font: 700 13px "Liberation Sans", sans-serif;
      letter-spacing: 0.6px;
      margin-right: 22px;
    }
    .winbtn {
      width: 20px;
      height: 20px;
      margin-right: 3px;
      background: #3c3c3c;
      border-radius: 2px;
      display: flex;
      align-items: center;
      justify-content: center;
      color: #fff;
      box-sizing: border-box;
    }
    .winbtn svg { width: 16px; height: 16px; }
    .menu {
      height: 23px;
      flex: none;
      background: #e3e3e3;
      display: flex;
      align-items: center;
      padding-left: 3px;
      box-sizing: border-box;
    }
    .menu .grip { margin-right: 6px; height: 17px; }
    .menu span { margin-right: 13px; white-space: pre; line-height: 14px; }
    .menu span.gapped { margin-right: 25px; }
    .menu small, .lat { font: 10px "Liberation Mono", monospace; }
    .bar {
      flex: none;
      display: flex;
      align-items: center;
      box-sizing: border-box;
      background: linear-gradient(#e6e6e6, #d4d4d4);
      border-bottom: 1px solid #f0f0f0;
    }
    .r1 { height: 33px; padding-top: 3px; }
    .r2 { height: 36px; padding-top: 3px; border-bottom: 2px solid #9c9c9c; background: linear-gradient(#e8e8e8, #dadada); }
    .r3 { height: 27px; background: linear-gradient(#d6d6d6, #e2e2e2); border-bottom: 1px solid #cfcfcf; }
    .r4 { height: 34px; padding-top: 1px; background: linear-gradient(#dedede, #cfcfcf); border-top: 1px solid #aaa; border-bottom: 1px solid #f4f4f4; }
    .cell { display: inline-flex; align-items: center; justify-content: center; flex: none; }
    .ic { width: 24px; height: 24px; display: block; }
    .ic.sm { width: 16px; height: 16px; margin-left: auto; margin-right: 2px; }
    .arrow {
      display: block;
      width: 0;
      height: 0;
      border: 3px solid transparent;
      border-top: 4px solid #222;
      border-bottom: 0;
      margin: 0 1px;
    }
    .sep { display: block; width: 1px; height: 28px; background: #bdbdbd; border-right: 1px solid #f2f2f2; }
    .grip {
      display: block;
      width: 1px;
      height: 26px;
      border-left: 2px dotted #a4a4a4;
    }
    .more {
      display: flex;
      flex-direction: column;
      align-items: center;
      width: 8px;
      gap: 8px;
      font: 700 12px/10px "Liberation Sans", sans-serif;
    }
    .start { width: 27px; }
    .search {
      width: 111px;
      height: 24px;
      box-sizing: border-box;
      background: #fff;
      border: 1px solid #b4b4b4;
      display: flex;
      align-items: center;
      padding-left: 2px;
      color: #8c8c8c;
    }
    .combo {
      position: relative;
      display: block;
      box-sizing: border-box;
      width: 100%;
      height: 18px;
      background: #fff;
      border: 1px solid #555;
      border-top: 2px solid #333;
      border-radius: 3px;
      font-size: 13px;
      line-height: 14px;
      color: #111;
      overflow: hidden;
    }
    .drop {
      position: absolute;
      right: 0;
      top: 0;
      bottom: 0;
      width: 17px;
      box-sizing: border-box;
      background: linear-gradient(#b8c8e4, #8ea8d0);
      border: 1px solid #445;
      border-radius: 3px;
    }
    .drop::after {
      content: "";
      position: absolute;
      left: 2px;
      top: 3px;
      border: 5px solid transparent;
      border-top: 7px solid #14244e;
      border-bottom: 0;
    }
    .body {
      flex: 1;
      min-height: 0;
      display: flex;
    }
    .leftcol {
      width: 1061px;
      flex: none;
      display: flex;
      flex-direction: column;
    }
    .tabs {
      height: 21px;
      flex: none;
      display: flex;
      background: #e6e6e6;
      border-bottom: 2px solid #555;
      box-sizing: border-box;
    }
    .tab {
      width: 124px;
      height: 19px;
      background: #4c4c4c;
      color: #f0f0f0;
      display: flex;
      align-items: center;
      padding-left: 5px;
      box-sizing: border-box;
      line-height: 19px;
    }
    .tab svg { width: 12px; height: 16px; flex: none; }
    .tab .t { margin-left: 10px; width: 62px; flex: none; white-space: pre; }
    .tab .x { margin-left: 4px; width: 12px; height: 12px; }
    .canvas {
      flex: 1;
      min-height: 0;
      position: relative;
      background: linear-gradient(#b6b8bb, #e6e7e9);
    }
    .canvas svg { display: block; width: 100%; height: 100%; }
    .canvas text { font-family: "Liberation Sans", sans-serif; }
    .vbar {
      width: 35px;
      flex: none;
      background: #d6d6d6;
      display: flex;
      flex-direction: column;
      align-items: center;
      border-left: 1px solid #a8a8a8;
      box-sizing: border-box;
    }
    .vcell { flex: none; display: block; }
    .hdots { display: block; width: 26px; height: 0; border-top: 2px dotted #999; }
    .hrule { display: block; width: 35px; height: 1px; background: #b4b4b4; }
    .larrow {
      display: block;
      width: 0;
      height: 0;
      margin-left: -14px;
      border: 4px solid transparent;
      border-right: 4px solid #111;
      border-left: 0;
    }
    .panel {
      width: 280px;
      flex: none;
      box-sizing: border-box;
      background: #efefef;
      border-top: 1px solid #999;
      border-bottom: 1px solid #666;
      display: flex;
      flex-direction: column;
      padding: 0 8px 0 11px;
    }
    .phead {
      height: 31px;
      flex: none;
      display: flex;
      align-items: center;
      font-size: 13px;
      font-weight: 700;
      color: #111;
    }
    .phead .box { width: 10px; height: 9px; border: 1px solid #111; border-top-width: 2px; margin: 0 13px 0 3px; background: #fff; }
    .phead .dash { margin: 0 8px; }
    .tree {
      flex: 1;
      min-height: 0;
      display: flex;
      flex-direction: column;
      border: 1px solid #777;
      background: #fff;
      box-sizing: border-box;
    }
    .thead {
      height: 17px;
      flex: none;
      display: flex;
      background: linear-gradient(#f4f4f4, #d8d8d8);
      border-bottom: 1px solid #aaa;
      font-size: 13px;
      line-height: 17px;
      padding-left: 6px;
    }
    .thead .c1 { width: 242px; flex: none; }
    .thead .c2 { width: 6px; flex: none; border-left: 1px solid #bbb; }
    .rows {
      flex: 1;
      min-height: 0;
      overflow: hidden;
      position: relative;
    }
    .rowl {
      height: 20px;
      display: flex;
      align-items: center;
      box-sizing: border-box;
      border-bottom: 1px solid #eee;
      padding-left: 3px;
      white-space: pre;
    }
    .rowl:nth-child(even) { background: #f6f6f6; }
    .rowl svg { width: 16px; height: 16px; flex: none; }
    .rowl svg.chk { width: 16px; height: 16px; }
    .rowl .mono { font: 10px "Liberation Mono", monospace; color: #222; }
    .rowl .prog { margin-left: 2px; }
    .elbow {
      width: 11px;
      height: 20px;
      margin: -12px 0 0 8px;
      box-sizing: border-box;
      border-left: 1px dotted #888;
      border-bottom: 1px dotted #888;
      flex: none;
    }
    .col-rule {
      position: absolute;
      left: 248px;
      top: 0;
      bottom: 0;
      width: 1px;
      background: #000;
    }
    .hscroll {
      height: 17px;
      flex: none;
      background: #f0f0f0;
      display: flex;
      align-items: center;
      color: #333;
    }
    .hscroll .thumb { width: 61px; height: 15px; background: #c8c8c8; margin-left: 5px; }
    .hscroll svg { width: 9px; height: 11px; flex: none; margin-left: 5px; }
    .hscroll svg.r { margin-left: auto; margin-right: 3px; }
    .split {
      height: 18px;
      flex: none;
      display: flex;
      align-items: center;
    }
    .split i { flex: 1; height: 1px; background: #c4c4c4; }
    .split b { width: 47px; height: 5px; background: #d0d0d0; margin: 0 6px; border: 1px solid #e8e8e8; }
    .rtabs {
      flex: 1;
      min-width: 0;
      background: #a8a8a8;
      display: flex;
      flex-direction: column;
      align-items: flex-start;
    }
    .gear { width: 16px; height: 16px; margin: 7px 0 0 8px; flex: none; }
    .rtab {
      width: 27px;
      box-sizing: border-box;
      flex: none;
      background: linear-gradient(90deg, #cdcdcd, #e0e0e0);
      border: 1px solid #8c8c8c;
      border-left: 0;
      border-radius: 0 5px 5px 0;
      display: flex;
      align-items: center;
      justify-content: center;
    }
    .rtab.on { width: 28px; background: #f2f2f2; }
    .status {
      height: 21px;
      flex: none;
      display: flex;
      background: linear-gradient(#e8e8e8, #dedede);
    }
    .status div { box-sizing: border-box; border-right: 1px solid #bcbcbc; display: flex; align-items: center; flex: none; }
    .status .s1 { width: 655px; }
    .status .s2 { width: 658px; }
    .status .s3 { width: 76px; padding-left: 23px; }
    .status svg { width: 16px; height: 18px; }
    .bottom {
      height: 8px;
      flex: none;
      background: linear-gradient(#2a2a2a, #0e0e0e);
    }
  `;

  private vbar() {
    let cursor = 212;
    return VBAR.map(([y, name]) => {
      const h = VH[name] ?? 24;
      const m = y - h / 2 - cursor;
      cursor += m + h;
      const body =
        name === "hg" ? html`<i class="hdots"></i>`
        : name === "hr" ? html`<i class="hrule"></i>`
        : name === "lv" ? html`<i class="larrow"></i>`
        : icon(name);
      return html`<span class="vcell" style="margin-top:${m.toFixed(1)}px">${body}</span>`;
    });
  }

  private rtabs() {
    let cursor = 235; // under the gear
    return TABS.map(([top, bottom, name], i) => {
      const m = top - cursor;
      cursor = bottom;
      return html`<div class="rtab ${i === 3 ? "on" : ""}" style="margin-top:${m}px;height:${bottom - top}px">${icon(name)}</div>`;
    });
  }

  private model() {
    return svg`
    <defs>
      <linearGradient id="cyl1" gradientUnits="userSpaceOnUse" x1="400" y1="360" x2="302" y2="575">
        <stop offset="0" stop-color="#ffffa6"/><stop offset=".33" stop-color="#ffffa2"/><stop offset=".48" stop-color="#e6e688"/>
        <stop offset=".72" stop-color="#a3a158"/><stop offset="1" stop-color="#6f6d38"/>
      </linearGradient>
      <linearGradient id="pock" gradientUnits="userSpaceOnUse" x1="408" y1="446" x2="372" y2="604">
        <stop offset="0" stop-color="#e8e88c"/><stop offset=".5" stop-color="#b0ae62"/><stop offset="1" stop-color="#777539"/>
      </linearGradient>
      <linearGradient id="cyl2" gradientUnits="userSpaceOnUse" x1="771" y1="528" x2="671" y2="748">
        <stop offset="0" stop-color="#ffffa8"/><stop offset=".35" stop-color="#ffffa0"/><stop offset=".55" stop-color="#ffff72"/>
        <stop offset=".78" stop-color="#aaa85c"/><stop offset="1" stop-color="#6a6836"/>
      </linearGradient>
      <linearGradient id="hole" gradientUnits="userSpaceOnUse" x1="1020" y1="672" x2="937" y2="843">
        <stop offset="0" stop-color="#777539"/><stop offset=".25" stop-color="#bcba6a"/><stop offset=".45" stop-color="#ffffa0"/><stop offset="1" stop-color="#ffffa8"/>
      </linearGradient>
      <linearGradient id="boss" gradientUnits="userSpaceOnUse" x1="620" y1="575" x2="690" y2="610">
        <stop offset="0" stop-color="#e0e088"/><stop offset=".5" stop-color="#8d8b48"/><stop offset="1" stop-color="#a3a158"/>
      </linearGradient>
    </defs>

    <path d="M400 360L660 480 560 700 301 576 298 568C305 525 345 420 400 360Z" fill="url(#cyl1)" stroke="#55552c" stroke-width=".6"/>
    <path d="M408 446L478 477C470 520 445 580 434 633L363 600C368 565 385 495 408 446Z" fill="url(#pock)" stroke="#333" stroke-width=".7"/>
    <path d="M478 477L487 483 470 520 452 570 434 633C445 580 470 520 478 477Z" fill="#c6c472" stroke="#333" stroke-width=".5"/>
    <ellipse cx="368" cy="443" rx="16" ry="15" fill="#b3b168" stroke="#444" stroke-width=".6"/>
    <ellipse cx="366" cy="446" rx="12.500" ry="12" fill="#c8c9cc"/>
    <ellipse cx="318" cy="581" rx="15" ry="5" transform="rotate(25 318 581)" fill="#ffffc8"/>
    <g transform="rotate(27 581 462)">
      <rect x="544" y="449" width="74" height="26" rx="13" fill="#c4c276"/>
      <path d="M568 449v26M603 449v26" stroke="#444" stroke-width=".7"/>
    </g>
    <g transform="rotate(27 507 606)">
      <rect x="470" y="592" width="74" height="28" rx="14" fill="#8d8b48"/>
      <rect x="476" y="594" width="68" height="26" rx="13" fill="#ffffb0"/>
      <path d="M484 608h50M482 608v12M531 608v12" stroke="#333" stroke-width=".6" fill="none"/>
    </g>

    <path d="M623 510L665 462 771 510 775 530 705 645 689 633 583 586Z" fill="#ffffa8"/>
    <path d="M623 510L665 462 771 510M623 510L583 586M623 510L728 558" fill="none" stroke="#333" stroke-width=".6"/>
    <path d="M771 510L775 532 760 535 755 520Z" fill="#a9a75d"/>
    <path d="M583 586L689 633 655 738 548 688Z" fill="#a9a75d" stroke="#444" stroke-width=".5"/>
    <path d="M548 688L655 738 662 762 553 713Z" fill="#7c7a3f" stroke="#444" stroke-width=".5"/>

    <path d="M617 567C617 595 640 610 655 610 675 610 694 595 694 572Z" fill="url(#boss)"/>
    <ellipse cx="654" cy="557" rx="39" ry="37" fill="#f6f69e"/>
    <ellipse cx="654" cy="556" rx="33" ry="31" fill="#ffffa8" stroke="#333" stroke-width=".7"/>
    <ellipse cx="653" cy="555" rx="16" ry="15" fill="#8b8946" stroke="#333" stroke-width=".7"/>
    <ellipse cx="653" cy="562" rx="11" ry="8" fill="#ffffa8"/>

    <path d="M908 589L938 537 1010 570 993 627 980 622Z" fill="#ffffaa" stroke="#333" stroke-width=".6"/>
    <path d="M930 547L1002 578" stroke="#333" stroke-width=".6"/>
    <path d="M1010 570L1012 585 993 632 980 622 993 627Z" fill="#a9a75d" stroke="#444" stroke-width=".5"/>

    <path d="M771 528L1030 645 928 870 655 738 689 633C700 600 730 555 771 528Z" fill="url(#cyl2)"/>
    <path d="M771 528C730 555 700 600 689 633L655 738" fill="none" stroke="#444" stroke-width=".6"/>
    <path d="M905 590C865 635 825 720 805 790" fill="none" stroke="#333" stroke-width=".7"/>
    <path d="M908 589L980 622" stroke="#333" stroke-width=".6"/>

    <ellipse cx="979" cy="757" rx="124" ry="27" transform="rotate(-65.400 979 757)" fill="#a9a75d" stroke="#444" stroke-width=".7"/>
    <ellipse cx="979" cy="757" rx="97" ry="18" transform="rotate(-65.400 979 757)" fill="url(#hole)" stroke="#555" stroke-width=".6"/>

    <path d="M803 792L875 825 853 866 782 835Z" fill="#ffffa8" stroke="#444" stroke-width=".6"/>
    <path d="M782 835L853 866 847 885 776 853Z" fill="#a9a75d" stroke="#444" stroke-width=".6"/>
    <path d="M776 853L847 885 848 898 777 865Z" fill="#7c7a3f" stroke="#444" stroke-width=".5"/>
    <path d="M875 825L878 848 848 898 847 885 853 866Z" fill="#a9a75d" stroke="#444" stroke-width=".6"/>

    <!-- work view crosshair -->
    <path d="M259 509.500H963M1026 509.500H1320" stroke="#222" stroke-width="1.100"/>
    <path d="M994.500 232V477M994.500 541V620M994.500 770V952" stroke="#222" stroke-width="1.100"/>
    <path d="M994.500 620V770" stroke="#7a7a90" stroke-width="1"/>
    <circle cx="992" cy="506" r="29" fill="#c9d52e"/>
    <circle cx="992" cy="506" r="13" fill="none" stroke="#222" stroke-width=".8" stroke-dasharray="5 2"/>
    <path d="M977 506.500h31M992.500 491v31" stroke="#fff" stroke-width="3"/>
    <path d="M977 506.500h31M992.500 491v31" stroke="#111" stroke-width="1"/>

    <path d="M976 756L1017 672" stroke="#2848c8" stroke-width="2"/>
    <path d="M1017 672l3 12-9-4z" fill="#2060e8"/>
    <path d="M976 756L979 782" stroke="#208838" stroke-width="1.500"/>
    <circle cx="979" cy="782" r="3" fill="#28a040"/>
    <path d="M976 756L1060 794" stroke="#c03048" stroke-width="2"/>
    <path d="M1068 799l-16-2 5-9z" fill="#c82840"/>
    <text x="1001" y="664" font-size="13" fill="#4848b8">ZM</text>
    <text x="961" y="797" font-size="13" fill="#48a860">YM</text>
    <text x="1051" y="814" font-size="13" fill="#b84860">XM</text>

    <!-- absolute triad -->
    <path d="M325 870l14 4 12 12-4 18-18-6-10-12z" fill="#d4d4d4" stroke="#bbb"/>
    <path d="M325 870l-6 16 18 6 10-6M337 892l-2 12" fill="none" stroke="#c4c4c4"/>
    <path d="M319 888L335 856" stroke="#3060c8" stroke-width="2"/>
    <path d="M335 852l1 9-7-3z" fill="#2858c8"/>
    <path d="M319 888L347 905" stroke="#c83048" stroke-width="2.500"/>
    <path d="M352 908l-9-1 3-5z" fill="#c83048"/>
    <path d="M318 890v18" stroke="#40a050" stroke-width="1.500"/>
    <rect x="313" y="886" width="7" height="7" fill="#eee"/>
    <text x="333" y="857" font-size="11" fill="#5050b0">Z</text>
    <text x="355" y="914" font-size="10" fill="#b05060">X</text>
    <text x="314" y="916" font-size="8" fill="#50a060">Y</text>`;
  }

  render() {
    return html`
      <div class="window">
        <div class="edge"><i class="dark"></i><i class="teal"></i><i class="white"></i></div>
        <div class="main">
          <div class="title">
            <svg class="logo" viewBox="0 0 24 20"><path d="M2 3c8-3 12 2 12 8l7-9c2 8-3 15-10 16 3-5 0-12-9-15z" fill="#2a70d0"/><path d="M4 3l8 2-3 9z" fill="#d82828"/><path d="M2 9c3 6 6 8 9 9-5 1-10-3-9-9z" fill="#e8d830"/></svg>
            <span class="name">NX 12.0.0.27 - 加工</span>
            <span class="siemens">SIEMENS</span>
            <div class="winbtn"><svg viewBox="0 0 16 16"><rect x="4" y="11" width="8" height="3" fill="#fff"/></svg></div>
            <div class="winbtn"><svg viewBox="0 0 16 16"><rect x="2.500" y="2.500" width="11" height="11" fill="none" stroke="#fff"/><rect x="2" y="2" width="12" height="2" fill="#fff"/></svg></div>
            <div class="winbtn"><svg viewBox="0 0 16 16"><path d="M3 2l10 12M13 2L3 14" stroke="#fff" stroke-width="2.200"/></svg></div>
          </div>
          <div class="menu">
            <i class="grip"></i>
            ${MENU.map(([a, b], i) => html`<span class=${i === 8 ? "gapped" : ""}>${a}<small>${b}</small></span>`)}
          </div>
          <div class="bar r1">${hbar(ROW1)}</div>
          <div class="bar r2">${hbar(ROW2)}</div>
          <div class="bar r3">${hbar(ROW3)}</div>
          <div class="body">
            <div class="leftcol">
              <div class="tabs">
                <div class="tab">
                  <svg viewBox="0 0 12 16"><path d="M6 0v9" stroke="#6a78e0" stroke-width="2.400"/><path d="M3 9h6l-3 7z" fill="#e8d870"/></svg>
                  <span class="t">样题<span class="lat">11.prt</span></span>
                  <svg viewBox="0 0 12 16"><path d="M2 3h6l2 2v8H2z" fill="none" stroke="#eee" stroke-width="1.500"/><rect x="5" y="5" width="7" height="6" fill="#4c4c4c"/><path d="M6 5h4v5" fill="none" stroke="#eee" stroke-width="1.500"/></svg>
                  <svg class="x" viewBox="0 0 12 12"><path d="M2 2l8 8M10 2l-8 8" stroke="#fff" stroke-width="2.400"/></svg>
                </div>
              </div>
              <div class="canvas">
                <svg viewBox="259 233 1061 719">${this.model()}</svg>
              </div>
            </div>
            <div class="vbar">${this.vbar()}</div>
            <div class="panel">
              <div class="phead"><i class="box"></i>工序导航器<span class="dash">-</span>程序顺序</div>
              <div class="tree">
                <div class="thead"><span class="c1">名称</span><span class="c2">扌</span></div>
                <div class="rows">
                  <div class="rowl"><span class="mono">NC_PROGRAM</span></div>
                  <div class="rowl"><i class="elbow"></i><svg viewBox="0 0 22 22">${folderS}</svg><span>未用项</span></div>
                  <div class="rowl">
                    <i class="elbow"></i>
                    <svg class="chk" viewBox="0 0 16 16"><path d="M1 8l4 6L15 2 5 9z" fill="#28b040"/></svg>
                    <svg viewBox="0 0 22 22">${folderS}</svg><span class="mono prog">PROGRAM</span>
                  </div>
                  ${Array.from({ length: 32 }, () => html`<div class="rowl"></div>`)}
                  <i class="col-rule"></i>
                </div>
                <div class="hscroll">
                  <svg viewBox="0 0 9 11"><path d="M7 1L2 5.500 7 10" fill="none" stroke="#333" stroke-width="2"/></svg>
                  <i class="thumb"></i>
                  <svg class="r" viewBox="0 0 9 11"><path d="M2 1l5 4.500L2 10" fill="none" stroke="#333" stroke-width="2"/></svg>
                </div>
              </div>
              <div class="split"><i></i><b></b><i></i></div>
            </div>
            <div class="rtabs">
              <svg class="gear" viewBox="0 0 16 16"><circle cx="8" cy="8" r="5" fill="none" stroke="#222" stroke-width="1.500"/><path d="M8 1v3M8 12v3M1 8h3M12 8h3M3 3l2 2M11 11l2 2M13 3l-2 2M5 11l-2 2" stroke="#222" stroke-width="1.400"/></svg>
              ${this.rtabs()}
            </div>
          </div>
          <div class="bar r4">${hbar(ROW4)}</div>
          <div class="status">
            <div class="s1"></div>
            <div class="s2"></div>
            <div class="s3"><svg viewBox="0 0 16 18"><path d="M1 3V1h3M12 1h3v2M15 15v2h-3M4 17H1v-2" fill="none" stroke="#999"/><rect x="3" y="3" width="10" height="12" fill="#dde4f0" stroke="#667"/><rect x="5" y="6" width="6" height="5" fill="#2860a8"/></svg></div>
          </div>
          <div class="bottom"></div>
        </div>
      </div>
    `;
  }
}
